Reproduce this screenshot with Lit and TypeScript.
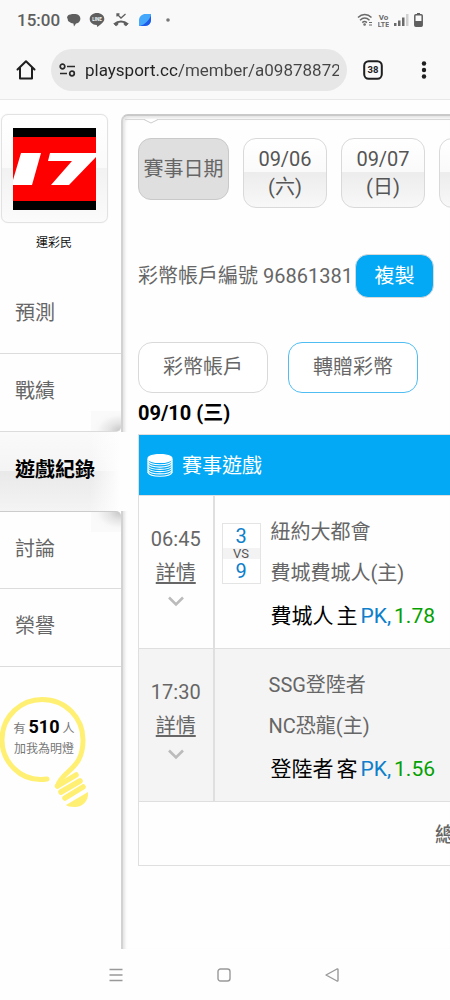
import { LitElement, html, css, svg, nothing } from "lit";
import { customElement, property } from "lit/decorators.js";

interface Bet {
  time: string;
  away: string;
  home: string;
  scores?: [number, number];
  pick: string;
  side: string;
  odds: string;
}

const DATES = [
  ["09/06", "(六)"],
  ["09/07", "(日)"],
  ["09/08", "(一)"],
];

const MENU = ["預測", "戰績", "遊戲紀錄", "討論", "榮譽"];

const BETS: Bet[] = [
  { time: "06:45", away: "紐約大都會", home: "費城費城人(主)", scores: [3, 9], pick: "費城人", side: "主", odds: "1.78" },
  { time: "17:30", away: "SSG登陸者", home: "NC恐龍(主)", pick: "登陸者", side: "客", odds: "1.56" },
];

@customElement("phone-header")
class PhoneHeader extends LitElement {
  static styles = css`
    :host {
      display: block;
      background: #f9f9f9;
      border-bottom: 1px solid #e8e8e8;
    }
    .status {
      display: flex;
      align-items: center;
      height: 40px;
      padding: 0 27px 0 17px;
      color: #5f5f5f;
    }
    .clock {
      font-size: 17px;
      font-weight: 500;
      line-height: 20px;
      margin-right: 6px;
    }
    .notices,
    .signals {
      display: flex;
      align-items: center;
    }
    .notices { gap: 8px; }
    .signals { gap: 5px; margin-left: auto; }
    .bar {
      display: flex;
      align-items: center;
      height: 59px;
      box-sizing: border-box;
      padding: 0 23px 0 15px;
    }
    button {
      border: 0;
      background: none;
      padding: 0;
      font: inherit;
      display: flex;
    }
    .address {
      flex: 1;
      min-width: 0;
      display: flex;
      align-items: center;
      gap: 9px;
      height: 42px;
      margin: 0 16px 0 14px;
      padding: 0 8px;
      border-radius: 21px;
      background: #e7e7e7;
    }
    .url {
      flex: 1;
      min-width: 0;
      border: 0;
      outline: 0;
      padding: 0;
      height: 30px;
      font: 400 17px/30px Roboto, sans-serif;
      color: transparent;
      background: linear-gradient(90deg, #222 93px, #444 93px);
      -webkit-background-clip: text;
      background-clip: text;
    }
    .tabs { margin-right: 38px; }
    .icon-text {
      font-family: Roboto, sans-serif;
      font-weight: 700;
    }
  `;

  render() {
    return html`
      <div class="status">
        <span class="clock">15:00</span>
        <div class="notices">
          <svg width="15" height="15" viewBox="0 0 15 15" fill="#5f5f5f">
            <path d="M2 2.500C4 .8 11 .4 13 2.600c2 2 1.800 5.200-.4 6.800-1 .7-1.900.9-2.600 1L8 13.500l-.6-3.100C5.500 10.200 4.500 9.900 3.600 9 2.200 8.300 1.500 7.300 1.800 6 .8 5 .8 3.700 2 2.500z" />
          </svg>
          <svg width="16" height="16" viewBox="0 0 16 16">
            <path fill="#5f5f5f" d="M8 1c4 0 7.300 2.500 7.300 5.900C15.300 10 11.500 12.400 8 15c.2-1.200.2-1.900-.6-2C3.500 12.600.7 10 .7 6.900.7 3.500 4 1 8 1z" />
            <text class="icon-text" x="8" y="8.900" font-size="4.500" text-anchor="middle" fill="#f9f9f9">LINE</text>
          </svg>
          <svg width="16" height="16" viewBox="0 0 16 16" fill="none" stroke="#5f5f5f">
            <path d="M4 4.500V2H6.500M4.500 2.500L8 6l4.500-4" stroke-width="1.300" />
            <path d="M1.500 12C5 8.800 11 8.800 14.500 12" stroke-width="2" />
            <path d="M.5 11.500l2.500 2.500 2-1.500V10M15.500 11.500L13 14l-2-1.500V10" fill="#5f5f5f" stroke-width=".6" />
          </svg>
          <svg width="16" height="16" viewBox="0 0 16 16">
            <path fill="#46a8fb" d="M2 8C2.200 4.500 5 2 8.500 2H14v6c0 3-2.500 6-6 6H2z" />
            <path fill="#1f5be8" d="M14 3.500V8c0 3-2.500 6-6 6H3C8 12.500 12 8.500 14 3.500z" />
          </svg>
          <svg width="16" height="16" viewBox="0 0 16 16"><circle cx="7" cy="8" r="1.800" fill="#777" /></svg>
        </div>
        <div class="signals">
          <svg width="16" height="14" viewBox="0 0 16 14" fill="none" stroke="#6a6a6a" stroke-width="1.500">
            <path d="M1 4.500c4-4 9.500-4 13.500 0M3 7.200c3-2.800 6.500-2.800 9.500 0M5.300 9.600c1.500-1.400 3-1.400 4.600 0" />
            <circle cx="7.600" cy="11.500" r=".6" />
            <path d="M12 9.500h3M12 12h3" stroke-width="1.200" />
          </svg>
          <svg width="11" height="15" viewBox="0 0 11 15" fill="#6a6a6a">
            <text class="icon-text" x="5.500" y="7" font-size="8" text-anchor="middle">Vo</text>
            <text class="icon-text" x="5.500" y="14" font-size="7" text-anchor="middle">LTE</text>
          </svg>
          <svg width="15" height="14" viewBox="0 0 15 14" fill="#6a6a6a">
            <path d="M0 10h2.500v3H0zM4 7.500h2.500V13H4zM8 4.500h2.500V13H8z" />
            <path fill="#d0d0d0" d="M12 1h2.500v12H12z" />
          </svg>
          <svg width="9" height="14" viewBox="0 0 9 14">
            <path fill="#5f5f5f" d="M3 0h3v2H3z" />
            <rect x=".8" y="1.800" width="7.400" height="11.400" rx="1" fill="none" stroke="#5f5f5f" stroke-width="1.500" />
            <path fill="#5f5f5f" d="M1 8h7v5H1z" />
          </svg>
        </div>
      </div>
      <div class="bar">
        <button aria-label="Home">
          <svg width="22" height="22" viewBox="0 0 22 22" fill="none" stroke="#1f1f1f" stroke-width="2" stroke-linejoin="round" stroke-linecap="round">
            <path d="M2.500 10.500L11 2.300 19.500 10.500M5 9V19.500H17V9" />
          </svg>
        </button>
        <div class="address">
          <svg width="17" height="14" viewBox="0 0 17 14" fill="none" stroke="#2a2a2a" stroke-width="1.700">
            <circle cx="3.500" cy="3.500" r="2.300" /><path d="M8 3.500h8M1 10.500h7" /><circle cx="13" cy="10.500" r="2.300" />
          </svg>
          <input class="url" type="text" aria-label="URL" value="playsport.cc/member/a098788724" />
        </div>
        <button class="tabs" aria-label="Tabs">
          <svg width="20" height="20" viewBox="0 0 20 20">
            <rect x="1.200" y="1.200" width="17.600" height="17.600" rx="4.500" fill="none" stroke="#1f1f1f" stroke-width="2" />
            <text class="icon-text" x="10" y="13.400" font-size="9.500" text-anchor="middle" fill="#1f1f1f">38</text>
          </svg>
        </button>
        <button aria-label="Menu">
          <svg width="6" height="20" viewBox="0 0 6 20" fill="#1f1f1f">
            <circle cx="3" cy="3.500" r="2.200" /><circle cx="3" cy="10" r="2.200" /><circle cx="3" cy="16.500" r="2.200" />
          </svg>
        </button>
      </div>
    `;
  }
}

@customElement("member-sidebar")
class MemberSidebar extends LitElement {
  static styles = css`
    :host {
      display: block;
      position: relative;
      z-index: 1;
    }
    .card {
      width: 105px;
      height: 107px;
      box-sizing: content-box;
      margin: 14px 0 0 1px;
      border: 1px solid #e2e2e2;
      box-shadow: 0 0 1px #ddd;
      border-radius: 7px;
      background: linear-gradient(#fff 0, #fafafa 50%, #f2f2f2 50%, #fbfbfb 100%);
      display: grid;
      place-items: center;
    }
    .name {
      margin: 12px 13px 0 0;
      text-align: center;
      font-size: 12px;
      line-height: 16px;
      color: #111;
    }
    .menu {
      margin: 25px 0 0;
      padding: 0;
      list-style: none;
    }
    .item {
      box-sizing: border-box;
      height: 78px;
      border-bottom: 1px solid #dcdcdc;
    }
    .link {
      display: flex;
      align-items: center;
      box-sizing: border-box;
      height: 100%;
      padding: 0 0 3px 15px;
      font-size: 20px;
      line-height: 28px;
      color: #666;
      text-decoration: none;
    }
    .before {
      border-bottom-right-radius: 5px;
      background: radial-gradient(30px 20px at 100% 100%, #c4c4c4 0, #e4e4e4 40%, #f8f8f8 80%, #fafafa 100%) right bottom / 30px 20px no-repeat;
    }
    .after {
      border-top: 1px solid #ccc;
      border-top-right-radius: 5px;
      background: radial-gradient(30px 20px at 100% 0, #c4c4c4 0, #e4e4e4 40%, #f8f8f8 80%, #fafafa 100%) right top / 30px 20px no-repeat;
    }
    .active {
      height: 79px;
      margin-right: -7px;
      border: 0;
      background:
        linear-gradient(90deg, transparent 70%, #fefefe 94%),
        linear-gradient(#fafafa 0, #f4f4f4 50%, #e9e9e9 50%, #f4f4f4 100%);
    }
    .active .link {
      color: #000;
      font-weight: 700;
    }
    .bulb {
      position: relative;
      display: block;
      margin-top: 30px;
      color: #777;
      text-decoration: none;
    }
    .bulb svg { display: block; }
    .fans {
      position: absolute;
      top: 20px;
      left: 0;
      width: 88px;
      text-align: center;
      font-size: 12px;
      line-height: 20px;
    }
    .count {
      font-size: 18px;
      font-weight: 700;
      color: #000;
    }
  `;

  render() {
    return html`
      <div class="card">
        <svg width="83" height="82" viewBox="0 0 83 82" role="img" aria-label="運彩民">
          <rect width="83" height="82" fill="#000" />
          <rect y="9" width="83" height="64" fill="#f00" />
          <path fill="#fff" d="M8 25H28L19 57H0V52zM37 25H83V29L56 57H38L59 33H35z" />
        </svg>
      </div>
      <div class="name">運彩民</div>
      <ul class="menu">
        ${MENU.map((label, i) => {
          const kind = ["", "before", "active", "after", ""][i];
          return html`<li class="item ${kind}"><a class="link" href="#">${label}</a></li>`;
        })}
      </ul>
      <a class="bulb" href="#">
        <svg width="92" height="114" viewBox="0 0 92 114" fill="none" stroke="#fff073" stroke-linecap="round">
          <path stroke-width="5" d="M47 82C20 86 2 64 2 43 2 18 22 2.500 42 2.500 66 2.500 83 21 83 43 83 60 77 67 68 75 60 82 58 87 57.500 89" />
          <path stroke-width="5.500" d="M57.500 89L76 78M61 95L80 84M65 101L83 90" />
          <path fill="#fff073" stroke="none" d="M66 108L88 95C89 104 82 110 75 110 70 110 67 109 66 108z" />
        </svg>
        <div class="fans">有 <span class="count">510</span> 人<br />加我為明燈</div>
      </a>
    `;
  }
}

@customElement("bet-table")
class BetTable extends LitElement {
  @property({ attribute: false }) bets: Bet[] = [];

  static styles = css`
    :host { display: block; }
    table {
      width: 620px;
      table-layout: fixed;
      border-collapse: collapse;
      font-size: 20px;
      color: #666;
    }
    td, th {
      padding: 0;
      border: 1px solid #dfdfdf;
      font-weight: 400;
      box-sizing: border-box;
      vertical-align: top;
    }
    .when { width: 75px; }
    .title {
      height: 61px;
      background: #04a9f5;
      color: #fff;
      text-align: left;
      vertical-align: middle;
    }
    .title-inner {
      display: flex;
      align-items: center;
      gap: 9px;
      padding: 2px 0 0 8px;
      line-height: 28px;
    }
    .game { height: 153px; }
    .game:nth-child(even) { background: #f4f4f4; }
    .game td { border-right-width: 2px; }
    .start {
      padding-top: 26px;
      text-align: center;
      line-height: 34px;
    }
    .more {
      display: block;
      color: #666;
      text-decoration: underline;
      text-underline-offset: 2px;
    }
    .start svg {
      display: block;
      margin: 6px auto 0;
    }
    .match {
      display: grid;
      grid-template-columns: 40px 1fr;
      column-gap: 9px;
      align-items: center;
      padding: 16px 0 0 7px;
    }
    .match.open { column-gap: 7px; }
    .score {
      width: 39px;
      box-sizing: border-box;
      border: 1px solid #e4e4e4;
      background: #fff;
      text-align: center;
      color: #0d7fcb;
      line-height: 24px;
    }
    .vs {
      display: block;
      background: #f3f3f3;
      color: #555;
      font-size: 13px;
      line-height: 11px;
    }
    .point { display: block; }
    .teams { line-height: 41px; }
    .pick {
      margin-left: 56px;
      font-size: 21px;
      line-height: 40px;
      padding-top: 2px;
      color: #000;
    }
    .kind { color: #0d7fcb; }
    .odds { color: #04a000; }
    .gap { display: flex; gap: 3px; }
    .total {
      height: 64px;
      padding-left: 296px;
      text-align: left;
      vertical-align: middle;
      font-weight: 500;
    }
  `;

  render() {
    return html`
      <table>
        <colgroup><col class="when" /><col /></colgroup>
        <thead>
          <tr>
            <th class="title" colspan="2">
              <div class="title-inner">
                <svg width="26" height="24" viewBox="0 0 26 24" fill="none" stroke="#fff" stroke-width="1.200">
                  <ellipse cx="13" cy="4.500" rx="12" ry="4" fill="#fff" />
                  ${[7, 9.3, 11.6, 13.9, 16.2, 18.5].map(
                    (y) => svg`<path d="M1 ${y}C3 ${y + 5} 23 ${y + 5} 25 ${y}" />`,
                  )}
                  <path d="M1 5v14M25 5v14" />
                </svg>
                賽事遊戲
              </div>
            </th>
          </tr>
        </thead>
        <tbody>
          ${this.bets.map(
            (b) => html`
              <tr class="game">
                <td class="start">
                  ${b.time}
                  <a class="more" href="#">詳情</a>
                  <svg width="16" height="11" viewBox="0 0 16 11" fill="none" stroke="#bbb" stroke-width="2.600">
                    <path d="M1 1.500l7 7 7-7" />
                  </svg>
                </td>
                <td>
                  <div class="match ${b.scores ? "" : "open"}">
                    <div>
                      ${b.scores
                        ? html`<div class="score">
                            <span class="point">${b.scores[0]}</span>
                            <span class="vs">VS</span>
                            <span class="point">${b.scores[1]}</span>
                          </div>`
                        : nothing}
                    </div>
                    <div class="teams">${b.away}<br />${b.home}</div>
                  </div>
                  <div class="pick gap">
                    <span>${b.pick}</span><span>${b.side}</span><span class="kind">PK,</span><span class="odds">${b.odds}</span>
                  </div>
                </td>
              </tr>
            `,
          )}
        </tbody>
        <tfoot>
          <tr><td class="total" colspan="2">總</td></tr>
        </tfoot>
      </table>
    `;
  }
}

@customElement("app-root")
class AppRoot extends LitElement {
  static styles = css`
    :host {
      display: flex;
      flex-direction: column;
      min-height: 100vh;
      overflow: hidden;
      background: #fefefe;
      font-family: Roboto, "Noto Sans CJK TC", sans-serif;
      color: #666;
    }
    .page {
      flex: 1;
      display: grid;
      grid-template-columns: 121px minmax(0, 1fr);
    }
    .main {
      margin-top: 14px;
      border-left: 2px solid #d2d2d2;
      border-top: 2px solid #c9c9c9;
      border-top-left-radius: 7px;
      box-shadow: inset 2px 2px 3px #e4e4e4;
      overflow: hidden;
    }
    .rule {
      margin: 3px 0 0 2px;
      border-top: 1px solid #d8d8d8;
    }
    .notch {
      display: block;
      margin: -1px 0 0 20px;
    }
    .content { padding: 14px 0 0 15px; }
    .dates {
      display: flex;
      align-items: flex-start;
      gap: 14px;
    }
    button {
      box-sizing: border-box;
      flex: none;
      padding: 0;
      border: 1px solid #d9d9d9;
      border-radius: 13px;
      background: #fff;
      color: #666;
      font: inherit;
      font-size: 20px;
      line-height: 28px;
    }
    .label {
      width: 91px;
      height: 62px;
      border-color: #c9c9c9;
      background: #dfdfdf;
    }
    .date {
      width: 84px;
      height: 70px;
      color: #555;
      background: linear-gradient(#fff 0, #fafafa 48%, #ececec 48%, #f8f8f8 100%);
    }
    .date span { display: block; }
    .account {
      display: flex;
      align-items: center;
      gap: 2px;
      margin-top: 46px;
      font-size: 20px;
      line-height: 28px;
      white-space: nowrap;
    }
    .copy {
      width: 79px;
      height: 44px;
      background: #04a9f5;
      color: #fff;
    }
    .actions {
      display: flex;
      gap: 20px;
      margin-top: 44px;
    }
    .action {
      width: 130px;
      height: 51px;
      padding-bottom: 2px;
      border-radius: 14px;
    }
    .gift { border-color: #4fbdf2; }
    h2 {
      margin: 6px 0 7px;
      font-size: 20px;
      line-height: 28px;
      font-weight: 700;
      color: #000;
    }
    .system {
      display: flex;
      justify-content: space-between;
      align-items: center;
      height: 51px;
      box-sizing: border-box;
      padding: 0 110px 0 109px;
    }
    .system button {
      display: flex;
      border: 0;
      background: none;
    }
  `;

  render() {
    return html`
      <phone-header></phone-header>
      <div class="page">
        <member-sidebar></member-sidebar>
        <main class="main">
          <div class="rule"></div>
          <svg class="notch" width="16" height="5" viewBox="0 0 16 5">
            <path d="M1 0h14L8 4.200z" fill="#fff" />
            <path d="M1 .5L8 4l7-3.500" fill="none" stroke="#ccc" />
          </svg>
          <div class="content">
            <div class="dates">
              <button class="label">賽事日期</button>
              ${DATES.map(([d, w]) => html`<button class="date"><span>${d}</span><span>${w}</span></button>`)}
            </div>
            <div class="account">
              <span>彩幣帳戶編號 96861381</span>
              <button class="copy">複製</button>
            </div>
            <div class="actions">
              <button class="action">彩幣帳戶</button>
              <button class="action gift">轉贈彩幣</button>
            </div>
            <h2>09/10 (三)</h2>
            <bet-table .bets=${BETS}></bet-table>
          </div>
        </main>
      </div>
      <nav class="system">
        <button aria-label="Recent">
          <svg width="14" height="14" viewBox="0 0 14 14" stroke="#999" stroke-width="1.300"><path d="M.5 1.500h13M.5 7h13M.5 12.500h13" /></svg>
        </button>
        <button aria-label="Home">
          <svg width="14" height="14" viewBox="0 0 14 14" fill="none" stroke="#999" stroke-width="1.400"><rect x="1" y="1" width="12" height="12" rx="2.500" /></svg>
        </button>
        <button aria-label="Back">
          <svg width="16" height="16" viewBox="0 0 16 16" fill="none" stroke="#999" stroke-width="1.400" stroke-linejoin="round"><path d="M2 8L13 2Q14 1.500 14 3V13Q14 14.500 13 14z" /></svg>
        </button>
      </nav>
    `;
  }
}
